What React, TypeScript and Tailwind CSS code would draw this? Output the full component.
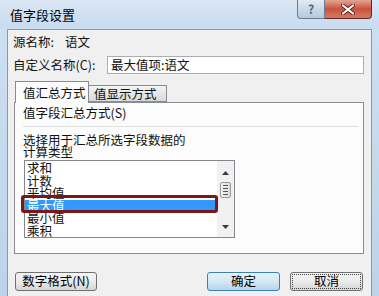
import React from 'react';

const items = ['求和', '计数', '平均值', '最大值', '最小值', '乘积'];

const btn =
  'flex items-center justify-center h-[19px] rounded-[3px] border text-[12.5px] leading-none text-black';

const App: React.FC = () => {
  return (
    <div className="relative w-[379px] h-[296px] overflow-hidden bg-gradient-to-b from-[#cfe0f2] to-[#bdd3ea] font-['Noto_Sans_CJK_SC',sans-serif] text-[12.5px] text-[#111]">
      {/* title bar */}
      <div className="flex h-[29px] items-start justify-between bg-gradient-to-b from-[#dbe8f6] via-[#cfe0f2] to-[#c9dcf0]">
        <span className="pl-[10px] pt-[6px] text-[13px] leading-[18px] text-black">值字段设置</span>
        <div className="flex pr-[7px]">
          <div className="flex h-[19px] w-[28px] items-center justify-center rounded-bl-[4px] border border-t-0 border-[#6a7d92] bg-gradient-to-b from-[#e2ebf5] via-[#cbd9e8] to-[#b6c9de] text-[12px] font-bold leading-none text-[#50647a]">
            ?
          </div>
          <div className="flex h-[19px] w-[47px] items-center justify-center rounded-br-[4px] border border-t-0 border-l-0 border-[#5a2a24] bg-gradient-to-b from-[#e4a493] via-[#c9503f] to-[#d77a62]">
            <svg width="14" height="11" viewBox="0 0 14 11">
              <path d="M2 1.5 L12 9.5 M12 1.5 L2 9.5" stroke="#5b1d14" strokeWidth="3.8" strokeLinecap="round" />
              <path d="M2 1.5 L12 9.5 M12 1.5 L2 9.5" stroke="#ffffff" strokeWidth="2.2" strokeLinecap="round" />
            </svg>
          </div>
        </div>
      </div>

      <div className="flex h-[267px]">
        <div className="w-[7px]" />
        {/* client area */}
        <div className="w-[365px] border-t border-l border-r border-[#8799ad] bg-[#f0f0f0]">
          <div className="mt-[4px] flex h-[16px] pl-[5px] leading-[16px]">
            <span className="w-[52px]">源名称:</span>
            <span>语文</span>
          </div>

          <div className="mt-[6px] flex h-[18px] items-center">
            <span className="w-[99px] pl-[5px] leading-[16px]">自定义名称(C):</span>
            <div className="flex h-[18px] w-[257px] items-center border border-[#abadb3] bg-white pl-[3px] leading-[16px]">
              最大值项:语文
            </div>
          </div>

          {/* tabs */}
          <div className="mt-[7px] flex h-[21px] items-end pl-[7px]">
            <div className="relative z-10 mb-[-1px] flex h-[22px] w-[74px] items-center border border-b-0 border-[#898c95] bg-[#fcfcfc] pl-[7px] leading-[16px]">
              值汇总方式
            </div>
            <div className="flex h-[17px] w-[78px] items-center border border-l-0 border-[#898c95] bg-gradient-to-b from-[#f3f3f3] to-[#dadada] pl-[5px] leading-[16px]">
              值显示方式
            </div>
          </div>

          {/* tab panel */}
          <div className="ml-[6px] h-[152px] w-[350px] border border-[#898c95] bg-[#fcfcfc]">
            <div className="mt-[2px] h-[16px] pl-[8px] leading-[16px]">值字段汇总方式(S)</div>
            <div className="ml-[8px] mr-[5px] mt-[5px] h-px bg-[#e0e0e0]" />
            <div className="mt-[7px] pl-[8px] leading-[12px]">
              <div>选择用于汇总所选字段数据的</div>
              <div>计算类型</div>
            </div>

            {/* list box */}
            <div className="relative ml-[9px] mt-[2px] flex h-[78px] w-[211px] border border-[#828790] bg-white">
              <div className="flex-1 overflow-hidden pt-[1px]">
                {items.map((it) => (
                  <div
                    key={it}
                    className={`h-[12.5px] pl-[2px] leading-[12.5px] ${
                      it === '最大值' ? 'bg-[#3399ff] text-white' : ''
                    }`}
                  >
                    {it}
                  </div>
                ))}
              </div>
              {/* scrollbar */}
              <div className="flex w-[17px] flex-col items-center bg-[#f1f1f1]">
                <div className="flex h-[17px] w-full items-center justify-center pt-[6px]">
                  <svg width="7" height="4" viewBox="0 0 7 4">
                    <path d="M0 4 L3.5 0 L7 4 Z" fill="#3c3c3c" />
                  </svg>
                </div>
                <div className="mt-[4px] flex h-[16px] w-[11px] flex-col items-center justify-center gap-[2px] rounded-[2px] border border-[#9a9a9a] bg-gradient-to-r from-[#f4f4f4] to-[#dcdcdc]">
                  <div className="h-px w-[5px] bg-[#555]" />
                  <div className="h-px w-[5px] bg-[#555]" />
                  <div className="h-px w-[5px] bg-[#555]" />
                  <div className="h-px w-[5px] bg-[#555]" />
                </div>
                <div className="flex-1" />
                <div className="flex h-[17px] w-full items-center justify-center pb-[4px]">
                  <svg width="7" height="4" viewBox="0 0 7 4">
                    <path d="M0 0 L3.5 4 L7 0 Z" fill="#3c3c3c" />
                  </svg>
                </div>
              </div>
              {/* annotation box */}
              <div className="absolute left-[-4px] top-[34px] h-[18px] w-[197px] rounded-[3px] border-[3px] border-[#7b1717]" />
            </div>
          </div>

          {/* buttons */}
          <div className="mt-[18px] flex">
            <div className={`${btn} ml-[7px] w-[82px] border-[#707070] bg-gradient-to-b from-[#f4f4f4] via-[#ebebeb] to-[#d5d5d5]`}>
              数字格式(N)
            </div>
            <div className={`${btn} ml-[110px] w-[73px] border-[#3c7fb1] bg-gradient-to-b from-[#e6f3fa] via-[#d3e8f5] to-[#b4d4e8]`}>
              确定
            </div>
            <div className={`${btn} relative ml-[10px] w-[73px] border-[#707070] bg-gradient-to-b from-[#f4f4f4] via-[#ebebeb] to-[#d5d5d5]`}>
              <div className="absolute inset-[1px] border border-dotted border-[#444]" />
              取消
            </div>
          </div>
        </div>
        <div className="w-[7px]" />
      </div>
    </div>
  );
};

export default App;
